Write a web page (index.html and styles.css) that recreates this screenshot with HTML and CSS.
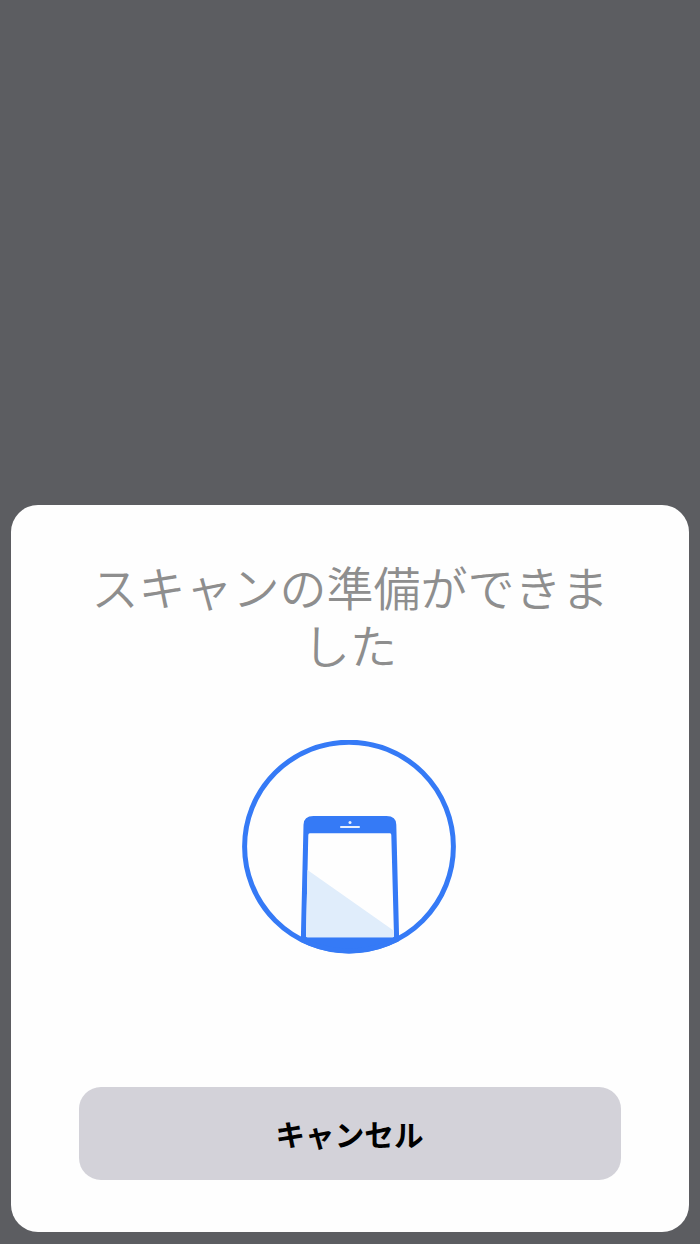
FILE: index.html
```html
<!DOCTYPE html>
<html lang="ja">

<head>
    <meta charset="UTF-8">
    <meta name="viewport" content="width=device-width, initial-scale=1.0">
    <title>スキャン</title>
    <link rel="stylesheet" href="styles.css">
</head>

<body>

    <section class="sheet">
        <h1 class="title">スキャンの準備ができました</h1>

        <svg class="scan-icon" viewBox="0 0 214 214" aria-hidden="true">
            <defs>
                <clipPath id="circle">
                    <circle cx="107" cy="106.600" r="106.800" />
                </clipPath>
            </defs>
            <g clip-path="url(#circle)">
                <path class="phone" d="M58.5 214 L61.5 84.700 Q61.7 76 71.5 76 H144.5 Q154.2 76 154.3 84.700 L157.5 214 Z" />
                <path class="screen" d="M67.8 93.3 H148 Q149.3 93.3 149.3 95 L152 196 Q152 197.200 150.5 197.200 H65.5 Q64 197.200 64 196 L66.3 95 Q66.3 93.3 67.8 93.3 Z" />
                <path class="shine" d="M65.5 130 L151.9 190.8 V196 Q152 197.200 150.5 197.200 H65.5 Q64 197.200 64 196 Z" />
                <rect class="speaker" x="98" y="86" width="20" height="2" rx=".9" />
                <circle class="camera" cx="108" cy="82.5" r="1.5" />
            </g>
            <circle class="ring" cx="107" cy="106.600" r="104.400" />
        </svg>

        <button class="cancel">キャンセル</button>
    </section>

</body>

</html>
```

FILE: styles.css
```css
* {
    box-sizing: border-box;
}

body {
    margin: 0;
    height: 100vh;
    display: flex;
    align-items: flex-end;
    padding: 0 11px 12px;
    background-color: #5c5d61;
    font-family: "Noto Sans CJK JP", sans-serif;
}

.sheet {
    width: 100%;
    height: 727px;
    padding: 52px 68px 52px;
    display: flex;
    flex-direction: column;
    align-items: center;
    border-radius: 27px;
    background-color: #fefefe;
}

.title {
    width: 530px;
    margin: 0;
    font-size: 47px;
    font-weight: 350;
    line-height: 57.5px;
    text-align: center;
    color: #8e8e8e;
}

.scan-icon {
    width: 214px;
    height: 214px;
    margin: 68px 2px 0 0;
}

.phone {
    fill: #357af6;
}

.screen {
    fill: #fefefe;
}

.shine {
    fill: #e0edfb;
}

.speaker,
.camera {
    fill: #e8f0fd;
}

.ring {
    fill: none;
    stroke: #357af6;
    stroke-width: 5;
}

.cancel {
    width: 100%;
    height: 93px;
    margin-top: auto;
    padding: 0 1px 1px 0;
    border: none;
    border-radius: 22px;
    background-color: #d3d2d9;
    color: #000;
    font-family: inherit;
    font-size: 29.6px;
    font-weight: 700;
}
```
